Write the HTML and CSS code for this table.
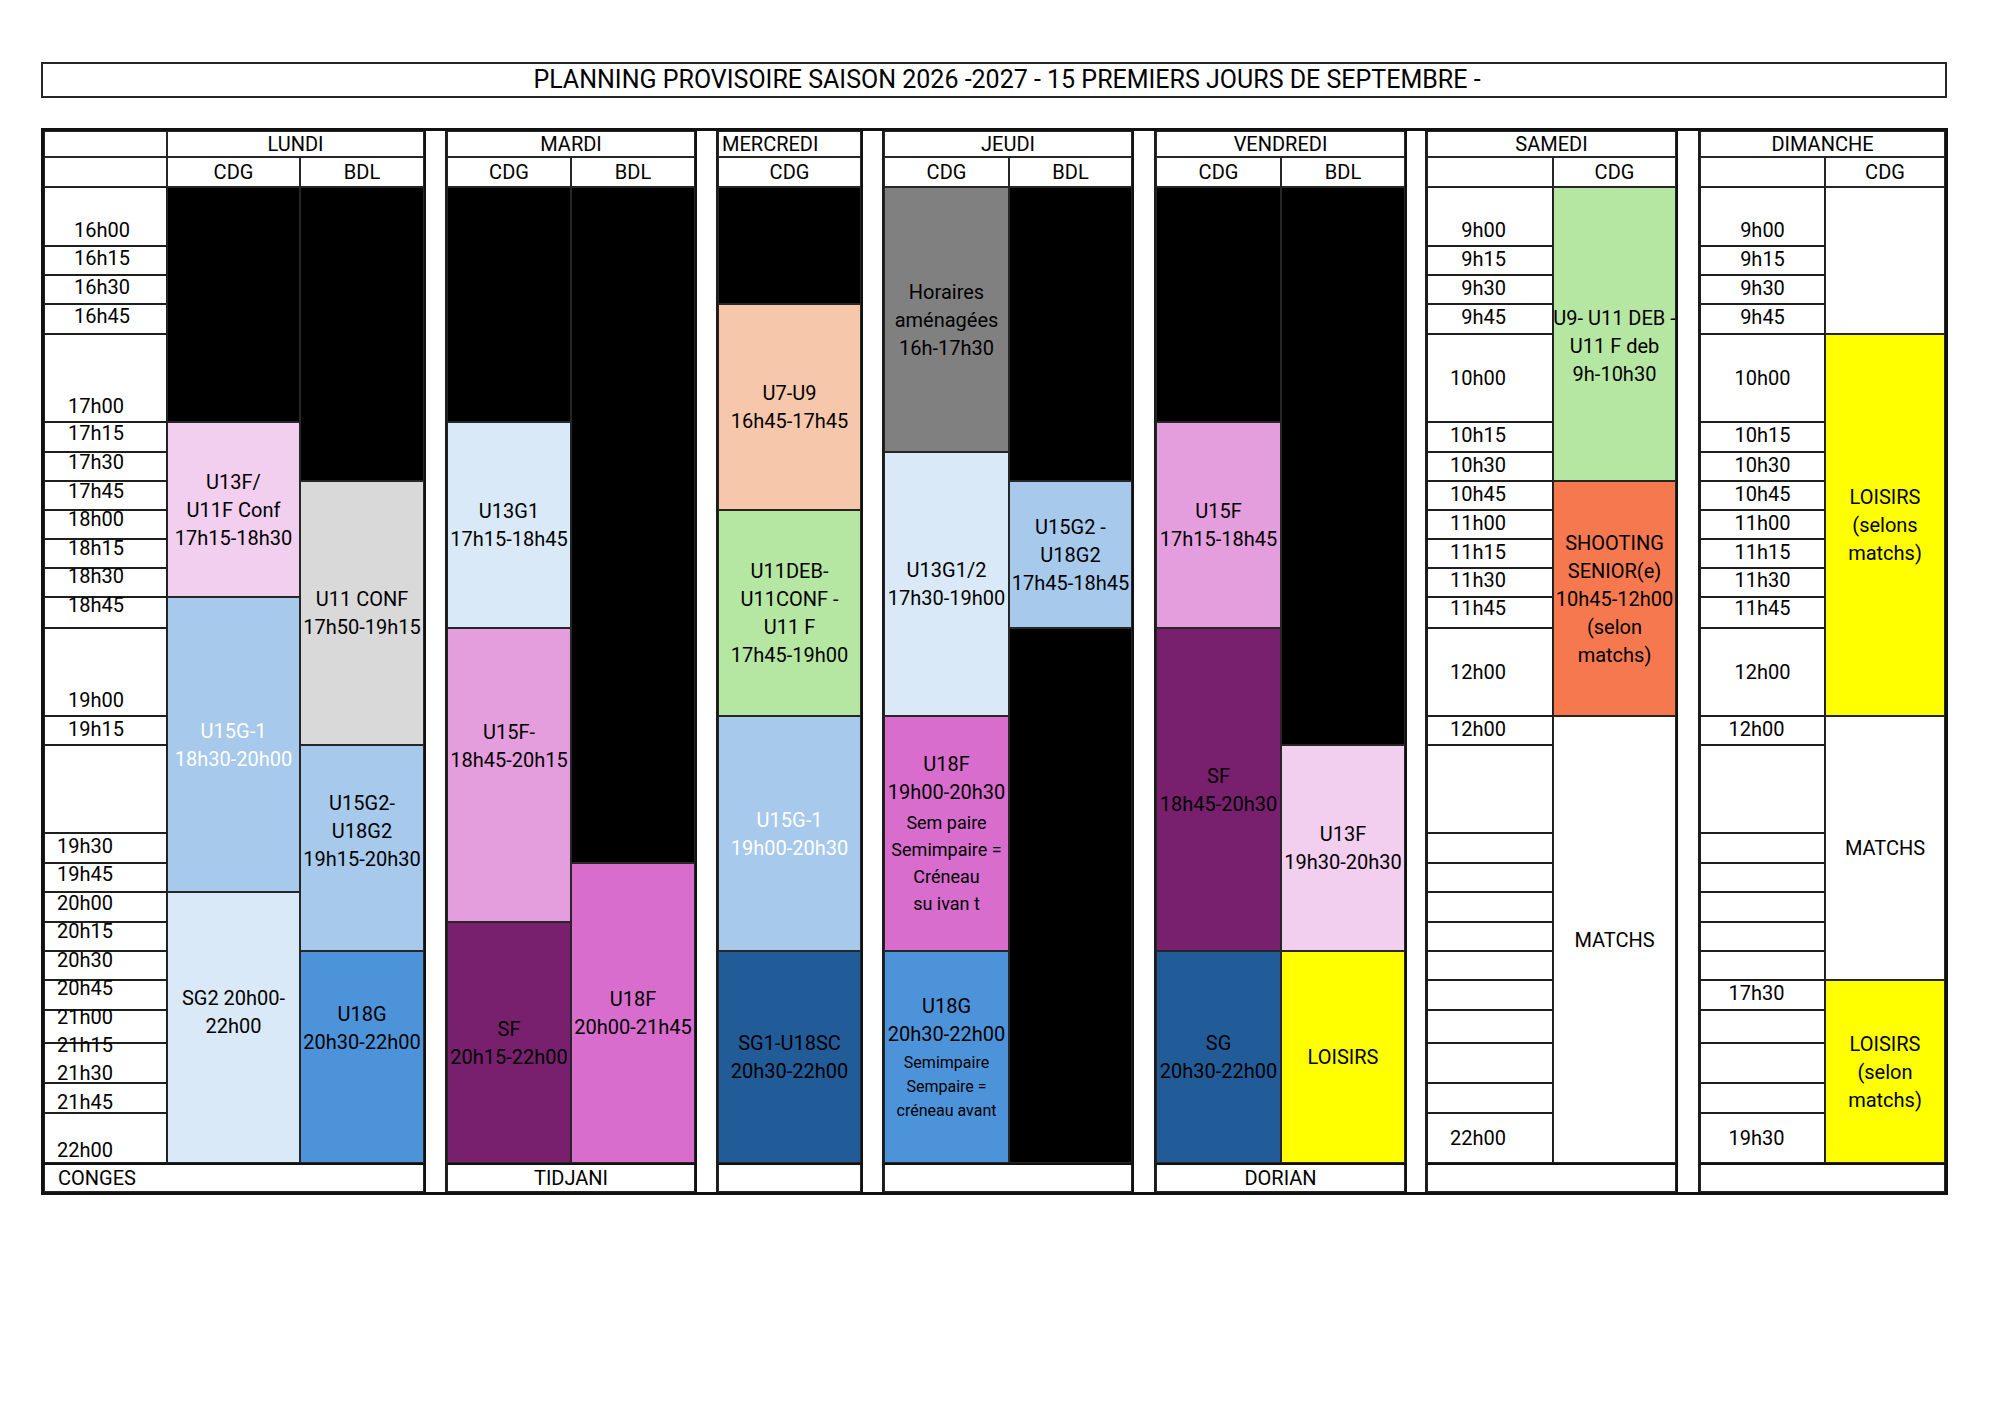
FILE: index.html
```html
<!DOCTYPE html>
<html lang="fr">
<head>
<meta charset="utf-8">
<title>Planning provisoire saison 2026-2027</title>
<link rel="stylesheet" href="styles.css">
</head>
<body>
<div class="page">
  <div class="title">PLANNING PROVISOIRE SAISON 2026 -2027 - 15 PREMIERS JOURS DE SEPTEMBRE -</div>
  <div class="sheet">
    <!-- header row 1 -->
    <div class="cell c1 r1"></div>
    <div class="cell c2 cs2 r1">LUNDI</div>
    <div class="cell c5 cs2 r1">MARDI</div>
    <div class="cell c8 r1 left">MERCREDI</div>
    <div class="cell c10 cs2 r1">JEUDI</div>
    <div class="cell c13 cs2 r1">VENDREDI</div>
    <div class="cell c16 cs2 r1">SAMEDI</div>
    <div class="cell c19 cs2 r1">DIMANCHE</div>

    <!-- spacers -->
    <div class="sp c4"></div>
    <div class="sp c7"></div>
    <div class="sp c9"></div>
    <div class="sp c12"></div>
    <div class="sp c15"></div>
    <div class="sp c18"></div>

    <!-- header row 2 -->
    <div class="cell c1 r2"></div>
    <div class="cell c2 r2">CDG</div>
    <div class="cell c3 r2">BDL</div>
    <div class="cell c5 r2">CDG</div>
    <div class="cell c6 r2">BDL</div>
    <div class="cell c8 r2">CDG</div>
    <div class="cell c10 r2">CDG</div>
    <div class="cell c11 r2">BDL</div>
    <div class="cell c13 r2">CDG</div>
    <div class="cell c14 r2">BDL</div>
    <div class="cell c16 r2"></div>
    <div class="cell c17 r2">CDG</div>
    <div class="cell c19 r2"></div>
    <div class="cell c20 r2">CDG</div>

    <!-- lundi time column -->
    <div class="tm tl pl34 tall c1 r3"><span class="lbl">16h00</span></div>
    <div class="tm tl pl34 c1 r4"><span class="lbl m2">16h15</span></div>
    <div class="tm tl pl34 c1 r5"><span class="lbl m2">16h30</span></div>
    <div class="tm tl pl34 c1 r6"><span class="lbl m2">16h45</span></div>
    <div class="tm tl pl28 tall c1 r7"><span class="lbl">17h00</span></div>
    <div class="tm tl pl28 c1 r8"><span class="lbl m1">17h15</span></div>
    <div class="tm tl pl28 c1 r9"><span class="lbl m0">17h30</span></div>
    <div class="tm tl pl28 c1 r10"><span class="lbl m0">17h45</span></div>
    <div class="tm tl pl28 c1 r11"><span class="lbl mn1">18h00</span></div>
    <div class="tm tl pl28 c1 r12"><span class="lbl mn1">18h15</span></div>
    <div class="tm tl pl28 c1 r13"><span class="lbl mn2">18h30</span></div>
    <div class="tm tl pl28 c1 r14"><span class="lbl mn2">18h45</span></div>
    <div class="tm tl pl28 tall c1 r15"><span class="lbl">19h00</span></div>
    <div class="tm tl pl28 c1 r16"><span class="lbl m3">19h15</span></div>
    <div class="tm tl c1 r17"></div>
    <div class="tm tl pl18 c1 r18"><span class="lbl m3">19h30</span></div>
    <div class="tm tl pl18 c1 r19"><span class="lbl m1">19h45</span></div>
    <div class="tm tl pl18 c1 r20"><span class="lbl m1">20h00</span></div>
    <div class="tm tl pl18 c1 r21"><span class="lbl mn1">20h15</span></div>
    <div class="tm tl pl18 c1 r22"><span class="lbl mn1">20h30</span></div>
    <div class="tm tl pl18 c1 r23"><span class="lbl mn2">20h45</span></div>
    <div class="tm tl pl18 c1 r24"><span class="lbl mn3">21h00</span></div>
    <div class="tm tl pl18 c1 r25"><span class="lbl mn8">21h15</span><span class="lbl m8">21h30</span></div>
    <div class="tm tl pl18 c1 r26"><span class="lbl m9">21h45</span></div>
    <div class="tm tl pl18 tall low c1 r27"><span class="lbl">22h00</span></div>

    <!-- lundi CDG -->
    <div class="cell k c2 r3 rs5"></div>
    <div class="cell pk c2 r8 rs6"><span>U13F/</span><span>U11F Conf</span><span>17h15-18h30</span></div>
    <div class="cell lb w c2 r14 rs6"><span>U15G-1</span><span>18h30-20h00</span></div>
    <div class="cell vlb up16 c2 r20 rs8"><span>SG2 20h00-</span><span>22h00</span></div>
    <!-- lundi BDL -->
    <div class="cell k c3 r3 rs7"></div>
    <div class="cell gy c3 r10 rs7"><span>U11 CONF</span><span>17h50-19h15</span></div>
    <div class="cell lb up17 c3 r17 rs5"><span>U15G2-</span><span>U18G2</span><span>19h15-20h30</span></div>
    <div class="cell bl up29 c3 r22 rs6"><span>U18G</span><span>20h30-22h00</span></div>

    <!-- mardi CDG -->
    <div class="cell k c5 r3 rs5"></div>
    <div class="cell vlb c5 r8 rs7"><span>U13G1</span><span>17h15-18h45</span></div>
    <div class="cell pm up29 c5 r15 rs6"><span>U15F-</span><span>18h45-20h15</span></div>
    <div class="cell pu c5 r21 rs7"><span>SF</span><span>20h15-22h00</span></div>
    <!-- mardi BDL -->
    <div class="cell k c6 r3 rs16"></div>
    <div class="cell mg c6 r19 rs9"><span>U18F</span><span>20h00-21h45</span></div>

    <!-- mercredi -->
    <div class="cell k c8 r3 rs3"></div>
    <div class="cell pe c8 r6 rs5"><span>U7-U9</span><span>16h45-17h45</span></div>
    <div class="cell gr c8 r11 rs5"><span>U11DEB-</span><span>U11CONF -</span><span>U11 F</span><span>17h45-19h00</span></div>
    <div class="cell lb w c8 r16 rs6"><span>U15G-1</span><span>19h00-20h30</span></div>
    <div class="cell db c8 r22 rs6"><span>SG1-U18SC</span><span>20h30-22h00</span></div>

    <!-- jeudi CDG -->
    <div class="cell dg c10 r3 rs6"><span>Horaires</span><span>aménagées</span><span>16h-17h30</span></div>
    <div class="cell vlb c10 r9 rs7"><span>U13G1/2</span><span>17h30-19h00</span></div>
    <div class="cell mg c10 r16 rs6"><span>U18F</span><span>19h00-20h30</span><span class="s18 gap">Sem paire</span><span class="s18">Semimpaire =</span><span class="s18">Créneau</span><span class="s18">su ivan t</span></div>
    <div class="cell bl c10 r22 rs6"><span>U18G</span><span>20h30-22h00</span><span class="s16 gap">Semimpaire</span><span class="s16">Sempaire =</span><span class="s16">créneau avant</span></div>
    <!-- jeudi BDL -->
    <div class="cell k c11 r3 rs7"></div>
    <div class="cell lb c11 r10 rs5"><span>U15G2 -</span><span>U18G2</span><span>17h45-18h45</span></div>
    <div class="cell k c11 r15 rs13"></div>

    <!-- vendredi CDG -->
    <div class="cell k c13 r3 rs5"></div>
    <div class="cell pm c13 r8 rs7"><span>U15F</span><span>17h15-18h45</span></div>
    <div class="cell pu c13 r15 rs7"><span>SF</span><span>18h45-20h30</span></div>
    <div class="cell db c13 r22 rs6"><span>SG</span><span>20h30-22h00</span></div>
    <!-- vendredi BDL -->
    <div class="cell k c14 r3 rs14"></div>
    <div class="cell pk c14 r17 rs5"><span>U13F</span><span>19h30-20h30</span></div>
    <div class="cell ye c14 r22 rs6"><span>LOISIRS</span></div>

    <!-- samedi time column -->
    <div class="tm tr tall c16 r3"><span class="lbl">9h00</span></div>
    <div class="tm tr c16 r4"><span class="lbl m3">9h15</span></div>
    <div class="tm tr c16 r5"><span class="lbl m3">9h30</span></div>
    <div class="tm tr c16 r6"><span class="lbl m3">9h45</span></div>
    <div class="tm tr mid c16 r7"><span class="lbl">10h00</span></div>
    <div class="tm tr c16 r8"><span class="lbl m3">10h15</span></div>
    <div class="tm tr c16 r9"><span class="lbl m3">10h30</span></div>
    <div class="tm tr c16 r10"><span class="lbl m3">10h45</span></div>
    <div class="tm tr c16 r11"><span class="lbl m3">11h00</span></div>
    <div class="tm tr c16 r12"><span class="lbl m3">11h15</span></div>
    <div class="tm tr c16 r13"><span class="lbl m2">11h30</span></div>
    <div class="tm tr c16 r14"><span class="lbl m1">11h45</span></div>
    <div class="tm tr mid c16 r15"><span class="lbl">12h00</span></div>
    <div class="tm tr c16 r16"><span class="lbl m3">12h00</span></div>
    <div class="tm tr c16 r17"></div>
    <div class="tm tr c16 r18"></div>
    <div class="tm tr c16 r19"></div>
    <div class="tm tr c16 r20"></div>
    <div class="tm tr c16 r21"></div>
    <div class="tm tr c16 r22"></div>
    <div class="tm tr c16 r23"></div>
    <div class="tm tr c16 r24"></div>
    <div class="tm tr c16 r25"></div>
    <div class="tm tr c16 r26"></div>
    <div class="tm tr mid c16 r27"><span class="lbl">22h00</span></div>
    <!-- samedi CDG -->
    <div class="cell gr dn12 c17 r3 rs7"><span>U9- U11 DEB -</span><span>U11 F deb</span><span>9h-10h30</span></div>
    <div class="cell or c17 r10 rs6"><span>SHOOTING</span><span>SENIOR(e)</span><span>10h45-12h00</span><span>(selon</span><span>matchs)</span></div>
    <div class="cell wh c17 r16 rs12"><span>MATCHS</span></div>

    <!-- dimanche time column -->
    <div class="tm tcn tall c19 r3"><span class="lbl">9h00</span></div>
    <div class="tm tcn c19 r4"><span class="lbl m3">9h15</span></div>
    <div class="tm tcn c19 r5"><span class="lbl m3">9h30</span></div>
    <div class="tm tcn c19 r6"><span class="lbl m3">9h45</span></div>
    <div class="tm tcn mid c19 r7"><span class="lbl">10h00</span></div>
    <div class="tm tcn c19 r8"><span class="lbl m3">10h15</span></div>
    <div class="tm tcn c19 r9"><span class="lbl m3">10h30</span></div>
    <div class="tm tcn c19 r10"><span class="lbl m3">10h45</span></div>
    <div class="tm tcn c19 r11"><span class="lbl m3">11h00</span></div>
    <div class="tm tcn c19 r12"><span class="lbl m3">11h15</span></div>
    <div class="tm tcn c19 r13"><span class="lbl m2">11h30</span></div>
    <div class="tm tcn c19 r14"><span class="lbl m1">11h45</span></div>
    <div class="tm tcn mid c19 r15"><span class="lbl">12h00</span></div>
    <div class="tm tcn c19 r16"><span class="lbl m3 nudge">12h00</span></div>
    <div class="tm tcn c19 r17"></div>
    <div class="tm tcn c19 r18"></div>
    <div class="tm tcn c19 r19"></div>
    <div class="tm tcn c19 r20"></div>
    <div class="tm tcn c19 r21"></div>
    <div class="tm tcn c19 r22"></div>
    <div class="tm tcn c19 r23"><span class="lbl m3 nudge">17h30</span></div>
    <div class="tm tcn c19 r24"></div>
    <div class="tm tcn c19 r25"></div>
    <div class="tm tcn c19 r26"></div>
    <div class="tm tcn mid c19 r27"><span class="lbl nudge">19h30</span></div>
    <!-- dimanche CDG -->
    <div class="cell wh c20 r3 rs4"></div>
    <div class="cell ye c20 r7 rs9"><span>LOISIRS</span><span>(selons</span><span>matchs)</span></div>
    <div class="cell wh c20 r16 rs7"><span>MATCHS</span></div>
    <div class="cell ye c20 r23 rs5"><span>LOISIRS</span><span>(selon</span><span>matchs)</span></div>

    <!-- footer -->
    <div class="cell ft left c1 cs3 r28 conges">CONGES</div>
    <div class="cell ft c5 cs2 r28">TIDJANI</div>
    <div class="cell ft c8 r28"></div>
    <div class="cell ft c10 cs2 r28"></div>
    <div class="cell ft c13 cs2 r28">DORIAN</div>
    <div class="cell ft c16 cs2 r28"></div>
    <div class="cell ft c19 cs2 r28"></div>
  </div>
</div>
</body>
</html>
```

FILE: styles.css
```css
html, body {
  margin: 0;
  padding: 0;
  background: #ffffff;
}

body {
  font-family: Roboto, "Liberation Sans", "DejaVu Sans", sans-serif;
  color: #000000;
}

.page {
  padding: 62px 0 0 41px;
}

.title {
  box-sizing: border-box;
  width: 1906px;
  height: 36px;
  border: 2px solid #262626;
  display: flex;
  align-items: center;
  justify-content: center;
  padding-left: 26px;
  font-size: 25px;
  line-height: 30px;
  white-space: nowrap;
  margin-bottom: 30px;
}

.sheet {
  display: grid;
  width: max-content;
  border: 3px solid #111111;
  grid-template-columns:
    123px 133px 124px 23px 124px 124px 23px 143px 23px 125px
    123px 24px 125px 124px 22px 126px 123px 24px 125px 120px;
  grid-template-rows:
    26px 30px
    59px 29px 29px 30px 88px 30px 29px 29px 29px 29px 29px 31px 88px 29px
    88px 30px 29px 30px 29px 29px 30px 33px 40px 30px 50px
    29px;
}

/* generic cell */
.cell {
  box-shadow: inset 0 0 0 1px #262626;
  display: flex;
  flex-direction: column;
  justify-content: center;
  align-items: center;
  text-align: center;
  font-size: 20px;
  line-height: 28px;
  white-space: nowrap;
  min-width: 0;
  min-height: 0;
}

.cell > span {
  display: block;
}

.cell.left {
  align-items: flex-start;
  padding-left: 4px;
}

.cell.conges {
  padding-left: 14px;
}

.cell.ft {
  box-shadow: inset 0 2px 0 #111111, inset 0 0 0 1px #262626;
  line-height: 24px;
}

/* spacer columns between days */
.sp {
  grid-row: 1 / 29;
  box-sizing: border-box;
  background: #ffffff;
  border-left: 2px solid #111111;
  border-right: 2px solid #1c1c1c;
}

/* time cells */
.tm {
  box-shadow: inset 0 0 0 1px #1e1e1e;
  display: flex;
  flex-direction: column;
  justify-content: flex-start;
  font-size: 20px;
  white-space: nowrap;
  min-height: 0;
  box-sizing: border-box;
}

.tm .lbl {
  display: block;
  line-height: 20px;
}

.tm.tall {
  justify-content: flex-end;
  padding-bottom: 6px;
}

.tm.tall.low {
  padding-bottom: 3px;
}

.tm.mid {
  justify-content: center;
}

.tl {
  align-items: flex-start;
}

.tr {
  align-items: flex-end;
  padding-right: 47px;
}

.tcn {
  align-items: center;
}

.pl34 { padding-left: 30px; }
.pl28 { padding-left: 24px; }
.pl18 { padding-left: 13px; }

.m0 { margin-top: 0; }
.m1 { margin-top: 1px; }
.m2 { margin-top: 2px; }
.m3 { margin-top: 3px; }
.m8 { margin-top: 8px; }
.m9 { margin-top: 9px; }
.mn1 { margin-top: -1px; }
.mn2 { margin-top: -2px; }
.mn3 { margin-top: -3px; }
.mn8 { margin-top: -8px; }

.nudge { margin-right: 12px; }

/* block text variants */
.w { color: #ffffff; }

.cell > .s18 {
  font-size: 18px;
  line-height: 27px;
}

.cell > .s16 {
  font-size: 16px;
  line-height: 24px;
}

.cell > .gap { margin-top: 3px; }

.up16 { padding-bottom: 32px; }
.up17 { padding-bottom: 34px; }
.up29 { padding-bottom: 58px; }
.dn12 { padding-top: 24px; }

/* colours */
.k   { background: #000000; }
.wh  { background: #ffffff; }
.pk  { background: #f2ceef; }
.lb  { background: #a6c9ec; }
.vlb { background: #dae9f8; }
.gy  { background: #d9d9d9; }
.bl  { background: #4d93d9; }
.pm  { background: #e59edd; }
.pu  { background: #78206e; }
.mg  { background: #d86dcd; }
.pe  { background: #f7c7ac; }
.gr  { background: #b5e6a2; }
.db  { background: #215c98; }
.dg  { background: #808080; }
.or  { background: #f6784f; }
.ye  { background: #ffff00; }

/* grid placement */
.c1  { grid-column-start: 1; }
.c2  { grid-column-start: 2; }
.c3  { grid-column-start: 3; }
.c4  { grid-column-start: 4; }
.c5  { grid-column-start: 5; }
.c6  { grid-column-start: 6; }
.c7  { grid-column-start: 7; }
.c8  { grid-column-start: 8; }
.c9  { grid-column-start: 9; }
.c10 { grid-column-start: 10; }
.c11 { grid-column-start: 11; }
.c12 { grid-column-start: 12; }
.c13 { grid-column-start: 13; }
.c14 { grid-column-start: 14; }
.c15 { grid-column-start: 15; }
.c16 { grid-column-start: 16; }
.c17 { grid-column-start: 17; }
.c18 { grid-column-start: 18; }
.c19 { grid-column-start: 19; }
.c20 { grid-column-start: 20; }
.cs2 { grid-column-end: span 2; }
.cs3 { grid-column-end: span 3; }

.r1  { grid-row-start: 1; }
.r2  { grid-row-start: 2; }
.r3  { grid-row-start: 3; }
.r4  { grid-row-start: 4; }
.r5  { grid-row-start: 5; }
.r6  { grid-row-start: 6; }
.r7  { grid-row-start: 7; }
.r8  { grid-row-start: 8; }
.r9  { grid-row-start: 9; }
.r10 { grid-row-start: 10; }
.r11 { grid-row-start: 11; }
.r12 { grid-row-start: 12; }
.r13 { grid-row-start: 13; }
.r14 { grid-row-start: 14; }
.r15 { grid-row-start: 15; }
.r16 { grid-row-start: 16; }
.r17 { grid-row-start: 17; }
.r18 { grid-row-start: 18; }
.r19 { grid-row-start: 19; }
.r20 { grid-row-start: 20; }
.r21 { grid-row-start: 21; }
.r22 { grid-row-start: 22; }
.r23 { grid-row-start: 23; }
.r24 { grid-row-start: 24; }
.r25 { grid-row-start: 25; }
.r26 { grid-row-start: 26; }
.r27 { grid-row-start: 27; }
.r28 { grid-row-start: 28; }

.rs3  { grid-row-end: span 3; }
.rs4  { grid-row-end: span 4; }
.rs5  { grid-row-end: span 5; }
.rs6  { grid-row-end: span 6; }
.rs7  { grid-row-end: span 7; }
.rs8  { grid-row-end: span 8; }
.rs9  { grid-row-end: span 9; }
.rs12 { grid-row-end: span 12; }
.rs13 { grid-row-end: span 13; }
.rs14 { grid-row-end: span 14; }
.rs16 { grid-row-end: span 16; }
```
